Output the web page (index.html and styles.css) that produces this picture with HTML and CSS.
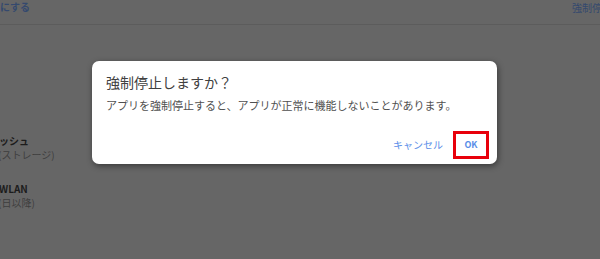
FILE: index.html
```html
<!DOCTYPE html>
<html lang="ja">
<head>
<meta charset="utf-8">
<link rel="stylesheet" href="styles.css">
</head>
<body>
<div class="page">
  <div class="topbar">
    <span class="link">にする</span>
    <span class="link right">強制停止</span>
  </div>
  <div class="list">
    <div class="item">
      <div class="name">ッシュ</div>
      <div class="sub">(ストレージ)</div>
    </div>
    <div class="item">
      <div class="name">WLAN</div>
      <div class="sub">(日以降)</div>
    </div>
  </div>
</div>
<div class="dialog">
  <div class="title">強制停止しますか？</div>
  <div class="message">アプリを強制停止すると、アプリが正常に機能しないことがあります。</div>
  <div class="actions">
    <span class="btn cancel">キャンセル</span>
    <span class="btn ok">OK</span>
  </div>
</div>
</body>
</html>
```

FILE: styles.css
```css
html, body {
  margin: 0;
  padding: 0;
  width: 600px;
  height: 259px;
  overflow: hidden;
  background: #666666;
  font-family: "Noto Sans CJK JP", "Noto Sans", sans-serif;
}
.page {
  width: 600px;
  height: 259px;
  display: flex;
  flex-direction: column;
}
.topbar {
  height: 24px;
  border-bottom: 1px solid #5c5c5c;
  display: flex;
  justify-content: space-between;
  align-items: flex-start;
}
.link {
  font-size: 10px;
  line-height: 12px;
  font-weight: bold;
  color: #34496e;
  padding-top: 1px;
}
.link.right {
  margin-right: -12px;
  font-weight: normal;
  padding-top: 2px;
}
.list {
  display: flex;
  flex-direction: column;
  gap: 22px;
  padding-top: 110px;
}
.item {
  display: flex;
  flex-direction: column;
  gap: 2px;
}
.name {
  font-size: 10px;
  line-height: 12px;
  font-weight: bold;
  color: #1c1c1c;
  margin-left: -1px;
}
.sub {
  font-size: 10px;
  line-height: 12px;
  color: #3e3e3e;
  margin-left: -2px;
}
.dialog {
  position: absolute;
  left: 92px;
  top: 61px;
  width: 405px;
  height: 103px;
  box-sizing: border-box;
  background: #ffffff;
  border-radius: 7px;
  box-shadow: 1px 2px 6px rgba(0, 0, 0, 0.45);
  padding: 12px 14px 0 14px;
  display: flex;
  flex-direction: column;
}
.title {
  font-size: 14px;
  line-height: 18px;
  color: #404040;
}
.message {
  font-size: 11px;
  line-height: 14px;
  color: #505050;
  margin-top: 7px;
}
.actions {
  display: flex;
  justify-content: flex-end;
  align-items: center;
  margin-top: 19px;
  margin-right: -6px;
}
.btn {
  font-size: 10px;
  line-height: 12px;
  color: #5a8ee8;
}
.cancel {
  margin-right: 10px;
}
.ok {
  border: 3px solid #e8000b;
  width: 30px;
  height: 22px;
  display: flex;
  align-items: center;
  justify-content: center;
  font-weight: bold;
  font-size: 9px;
}
```
